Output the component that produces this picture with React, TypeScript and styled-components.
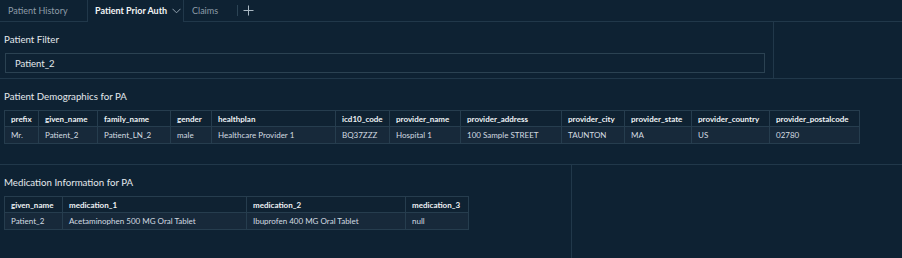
import React from "react";
import styled, { createGlobalStyle } from "styled-components";

const GlobalStyle = createGlobalStyle`
  html, body {
    margin: 0;
    padding: 0;
    background: #0e2233;
  }
  body {
    font-family: Lato, "Open Sans", sans-serif;
    color: #d6dde3;
  }
`;

const LINE = "#21384a";

const tabs = [
  { id: "history", title: "Patient History", width: 87 },
  { id: "prior-auth", title: "Patient Prior Auth", width: 97, active: true },
  { id: "claims", title: "Claims", width: 53 },
];

const demographics = {
  columns: [
    { key: "prefix", width: 34 },
    { key: "given_name", width: 59 },
    { key: "family_name", width: 73 },
    { key: "gender", width: 41 },
    { key: "healthplan", width: 124 },
    { key: "icd10_code", width: 54 },
    { key: "provider_name", width: 71 },
    { key: "provider_address", width: 101 },
    { key: "provider_city", width: 63 },
    { key: "provider_state", width: 67 },
    { key: "provider_country", width: 78 },
    { key: "provider_postalcode", width: 90 },
  ],
  rows: [
    [
      "Mr.",
      "Patient_2",
      "Patient_LN_2",
      "male",
      "Healthcare Provider 1",
      "BQ37ZZZ",
      "Hospital 1",
      "100 Sample STREET",
      "TAUNTON",
      "MA",
      "US",
      "02780",
    ],
  ],
};

const medications = {
  columns: [
    { key: "given_name", width: 58 },
    { key: "medication_1", width: 184 },
    { key: "medication_2", width: 159 },
    { key: "medication_3", width: 63 },
  ],
  rows: [
    [
      "Patient_2",
      "Acetaminophen 500 MG Oral Tablet",
      "Ibuprofen 400 MG Oral Tablet",
      "null",
    ],
  ],
};

type Column = { key: string; width: number };

function DataTable({ columns, rows }: { columns: Column[]; rows: string[][] }) {
  return (
    <StyledTable>
      <colgroup>
        {columns.map((c) => (
          <col key={c.key} style={{ width: c.width }} />
        ))}
      </colgroup>
      <thead>
        <tr>
          {columns.map((c) => (
            <HeadCell key={c.key}>{c.key}</HeadCell>
          ))}
        </tr>
      </thead>
      <tbody>
        {rows.map((row, i) => (
          <tr key={i}>
            {row.map((v, j) => (
              <BodyCell key={j}>{v}</BodyCell>
            ))}
          </tr>
        ))}
      </tbody>
    </StyledTable>
  );
}

export default function App() {
  return (
    <>
      <GlobalStyle />
      <Page>
        <TabBar>
          {tabs.map((t) => (
            <Tab key={t.id} $active={!!t.active} $width={t.width}>
              {t.title}
              {t.active && (
                <svg width="9" height="6" viewBox="0 0 9 6">
                  <path
                    d="M0.5 0.8 L4.5 4.8 L8.5 0.8"
                    fill="none"
                    stroke="#9fb0bd"
                    strokeWidth="0.9"
                  />
                </svg>
              )}
            </Tab>
          ))}
          <TabDivider />
          <AddTab>
            <svg width="11" height="11" viewBox="0 0 11 11">
              <path d="M5.5 0.5 V10.5 M0.5 5.5 H10.5" stroke="#aab8c3" strokeWidth="1" />
            </svg>
          </AddTab>
        </TabBar>

        <Sheet>
          <Row $height={57} $columns="774px 1fr">
            <Visual $divider>
              <VisualTitle>Patient Filter</VisualTitle>
              <FilterInput>Patient_2</FilterInput>
            </Visual>
            <Visual />
          </Row>
          <Row $height={86} $columns="1fr">
            <Visual>
              <VisualTitle>Patient Demographics for PA</VisualTitle>
              <DataTable {...demographics} />
            </Visual>
          </Row>
          <Row $height={93} $columns="572px 1fr" $last>
            <Visual $divider>
              <VisualTitle>Medication Information for PA</VisualTitle>
              <DataTable {...medications} />
            </Visual>
            <Visual />
          </Row>
        </Sheet>
      </Page>
    </>
  );
}

const Page = styled.div`
  width: 902px;
  height: 258px;
  overflow: hidden;
  background: #0e2233;
`;

const TabBar = styled.div`
  display: flex;
  align-items: stretch;
  height: 22px;
  box-sizing: border-box;
  border-bottom: 1px solid ${LINE};
`;

const Tab = styled.div<{ $active: boolean; $width: number }>`
  display: flex;
  align-items: center;
  gap: 5px;
  box-sizing: border-box;
  width: ${(p) => p.$width}px;
  padding: 0 0 1px ${(p) => (p.$active ? 7 : 8)}px;
  margin-bottom: ${(p) => (p.$active ? "-1px" : "0")};
  font-size: 9px;
  font-weight: ${(p) => (p.$active ? 700 : 400)};
  color: ${(p) => (p.$active ? "#f2f5f7" : "#8d9ca8")};
  white-space: nowrap;
  background: #0e2233;
  border-left: ${(p) => (p.$active ? `1px solid ${LINE}` : "none")};
  border-right: ${(p) => (p.$active ? `1px solid ${LINE}` : "none")};
`;

const TabDivider = styled.div`
  width: 1px;
  height: 11px;
  align-self: center;
  background: #2c4455;
`;

const AddTab = styled.div`
  display: flex;
  align-items: center;
  padding-left: 5px;
`;

const Sheet = styled.div`
  display: flex;
  flex-direction: column;
`;

const Row = styled.div<{ $height: number; $columns: string; $last?: boolean }>`
  display: grid;
  grid-template-columns: ${(p) => p.$columns};
  height: ${(p) => p.$height}px;
  box-sizing: border-box;
  border-bottom: ${(p) => (p.$last ? "none" : `1px solid ${LINE}`)};
`;

const Visual = styled.div<{ $divider?: boolean }>`
  display: flex;
  flex-direction: column;
  align-items: flex-start;
  padding: 0 4px;
  border-right: ${(p) => (p.$divider ? `1px solid ${LINE}` : "none")};
  min-width: 0;
`;

const VisualTitle = styled.div`
  height: 13px;
  margin: 11px 0 7px;
  font-size: 9.7px;
  line-height: 13px;
  color: #e4e9ed;
  white-space: nowrap;
`;

const FilterInput = styled.div`
  display: flex;
  align-items: center;
  align-self: stretch;
  box-sizing: border-box;
  height: 20px;
  margin: 0 4px 0 1px;
  padding-left: 9px;
  border: 1px solid #2b4252;
  font-size: 9.5px;
  color: #e4e9ed;
`;

const StyledTable = styled.table`
  border-collapse: collapse;
  table-layout: fixed;
  font-size: 8px;
  white-space: nowrap;
`;

const HeadCell = styled.th`
  height: 16px;
  padding: 0 6px;
  box-sizing: border-box;
  text-align: left;
  font-weight: 700;
  color: #eef2f5;
  background: #0f2232;
  border: 1px solid #263d4e;
`;

const BodyCell = styled.td`
  height: 17px;
  padding: 0 6px;
  box-sizing: border-box;
  color: #d3dbe1;
  background: #17293a;
  border: 1px solid #263d4e;
`;
